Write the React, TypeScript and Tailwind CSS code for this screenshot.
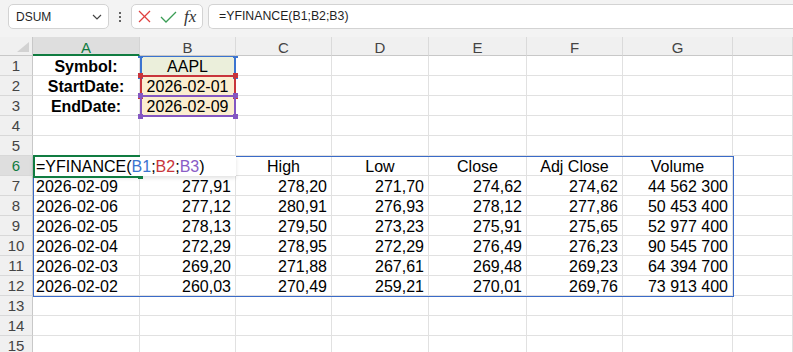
import React from "react";

type Tone = "blue" | "red" | "purple";

const COL_LETTERS = ["A", "B", "C", "D", "E", "F", "G", ""];

const tableRows: string[][] = [
  ["2026-02-09", "277,91", "278,20", "271,70", "274,62", "274,62", "44 562 300"],
  ["2026-02-06", "277,12", "280,91", "276,93", "278,12", "277,86", "50 453 400"],
  ["2026-02-05", "278,13", "279,50", "273,23", "275,91", "275,65", "52 977 400"],
  ["2026-02-04", "272,29", "278,95", "272,29", "276,49", "276,23", "90 545 700"],
  ["2026-02-03", "269,20", "271,88", "267,61", "269,48", "269,23", "64 394 700"],
  ["2026-02-02", "260,03", "270,49", "259,21", "270,01", "269,76", "73 913 400"],
];

const headerCols = ["", "", "High", "Low", "Close", "Adj Close", "Volume", ""];

const boxBorder: Record<Tone, string> = {
  blue: "border-[#3b74d0]",
  red: "border-[#c8353b]",
  purple: "border-[#8457c2]",
};

const boxFill: Record<Tone, string> = {
  blue: "bg-[#3b74d0]",
  red: "bg-[#c8353b]",
  purple: "bg-[#8457c2]",
};

// coloured range outline drawn by Excel while a formula is being edited
function RefBox({ tone }: { tone: Tone }) {
  return (
    <div
      className={`pointer-events-none absolute left-0 top-[-1px] z-10 h-[22px] w-[96px] border-2 ${boxBorder[tone]}`}
    >
      <span className={`absolute -left-[4px] -top-[4px] size-[5px] ${boxFill[tone]}`} />
      <span className={`absolute -right-[4px] -top-[4px] size-[5px] ${boxFill[tone]}`} />
      <span className={`absolute -bottom-[4px] -left-[4px] size-[5px] ${boxFill[tone]}`} />
      <span className={`absolute -bottom-[4px] -right-[4px] size-[5px] ${boxFill[tone]}`} />
    </div>
  );
}

function FormulaBar() {
  return (
    <div className="flex h-[37px] items-start bg-[#f3f3f3] pt-1">
      {/* Name box */}
      <div className="ml-2 flex h-[25px] w-[101px] items-center justify-between rounded-[5px] border border-[#d3d3d3] bg-white pl-[7px] pr-[6px] text-[12px] text-[#1f1f1f]">
        <span>DSUM</span>
        <svg width="10" height="6" viewBox="0 0 10 6" fill="none" stroke="#444" strokeWidth="1.2">
          <polyline points="1,1 5,5 9,1" />
        </svg>
      </div>

      {/* more dots */}
      <div className="flex h-[25px] w-[22px] flex-col items-center justify-center gap-[2px]">
        <span className="size-[2px] rounded-full bg-[#333]" />
        <span className="size-[2px] rounded-full bg-[#333]" />
        <span className="size-[2px] rounded-full bg-[#333]" />
      </div>

      {/* cancel / enter / fx */}
      <div className="flex h-[25px] w-[72px] items-center rounded-[5px] border border-[#d3d3d3] bg-white pl-[6px]">
        <svg width="13" height="13" viewBox="0 0 13 13" stroke="#e0403f" strokeWidth="1.3">
          <line x1="1" y1="1" x2="12" y2="12" />
          <line x1="12" y1="1" x2="1" y2="12" />
        </svg>
        <svg className="ml-[9px]" width="17" height="12" viewBox="0 0 17 12" fill="none" stroke="#3a9d55" strokeWidth="1.3">
          <polyline points="1,6 6,11 16,1" />
        </svg>
        <span className="ml-[7px] font-['Liberation_Serif',serif] text-[17px] italic leading-none text-[#333]">
          fx
        </span>
      </div>

      {/* formula text */}
      <div className="ml-[5px] flex h-[25px] flex-1 items-center rounded-l-[5px] border border-r-0 border-[#d3d3d3] bg-white pl-[10px] text-[12.3px] text-[#1f1f1f]">
        =YFINANCE(B1;B2;B3)
      </div>
    </div>
  );
}

function ColumnHeader() {
  return (
    <>
      <div className="relative z-20 h-[19px] border-b border-r border-[#c8c8c8] bg-[#f0f0f0]">
        <svg className="absolute bottom-[3px] right-[3px]" width="12" height="10" viewBox="0 0 12 10">
          <polygon points="12,0 12,10 0,10" fill="#d2d2d2" />
        </svg>
      </div>
      {COL_LETTERS.map((c, i) => (
        <div
          key={i}
          className={
            i === 0
              ? "relative z-20 h-[19px] border-b-2 border-r border-b-[#107c41] border-r-[#d4d4d4] bg-[#dedede] pt-px text-center text-[15px] leading-[19px] text-[#107c41]"
              : "relative z-20 h-[19px] border-b border-r border-b-[#c8c8c8] border-r-[#dadada] bg-[#f0f0f0] pt-px text-center text-[15px] leading-[19px] text-[#444]"
          }
        >
          {c}
        </div>
      ))}
    </>
  );
}

function RowNumber({ n }: { n: number }) {
  return (
    <div
      className={
        n === 6
          ? "h-5 border-b border-r border-b-[#d8d8d8] border-r-[#c8c8c8] bg-[#dedede] text-center text-[15px] leading-5 text-[#107c41]"
          : "h-5 border-b border-r border-b-[#d8d8d8] border-r-[#c8c8c8] bg-[#f0f0f0] text-center text-[15px] leading-5 text-[#444]"
      }
    >
      {n}
    </div>
  );
}

const cellBase =
  "relative flex h-5 whitespace-nowrap border-b border-r border-[#e1e1e1] px-[3px] pt-px text-[16px] leading-5 text-black";

function SheetRow({ n }: { n: number }) {
  const cells: React.ReactNode[] = [];

  for (let c = 0; c < 8; c++) {
    let content: React.ReactNode = null;
    let cls = cellBase;

    if (n === 1 && c === 0) {
      content = "Symbol:";
      cls += " justify-center font-bold";
    } else if (n === 2 && c === 0) {
      content = "StartDate:";
      cls += " justify-center font-bold";
    } else if (n === 3 && c === 0) {
      content = "EndDate:";
      cls += " justify-center font-bold";
    } else if (n === 1 && c === 1) {
      content = (
        <>
          AAPL
          <RefBox tone="blue" />
        </>
      );
      cls += " justify-center bg-[#ebefdb]";
    } else if (n === 2 && c === 1) {
      content = (
        <>
          2026-02-01
          <RefBox tone="red" />
        </>
      );
      cls += " justify-center bg-[#fbeed0]";
    } else if (n === 3 && c === 1) {
      content = (
        <>
          2026-02-09
          <RefBox tone="purple" />
        </>
      );
      cls += " justify-center bg-[#fbeed0]";
    } else if (n === 6 && c === 0) {
      content = (
        <>
          {/* in-cell editor overflowing into B6 */}
          <div className="absolute left-0 top-0 z-30 h-[20px] w-[203px] bg-white pl-[3px] pt-px leading-5 shadow-[0_2px_4px_rgba(0,0,0,0.12)]">
            =YFINANCE(<span className="text-[#3b74d0]">B1</span>;
            <span className="text-[#c8353b]">B2</span>;
            <span className="text-[#8a5cc6]">B3</span>)
          </div>
          <div className="pointer-events-none absolute left-0 top-[-1px] z-40 h-[23px] w-[107px] border-2 border-r-0 border-[#107c41]" />
          <div className="absolute left-[105px] top-[20px] z-40 h-[3px] w-[5px] bg-[#107c41]" />
        </>
      );
    } else if (n === 6) {
      content = headerCols[c];
      cls += " justify-center";
    } else if (n >= 7 && n <= 12 && c < 7) {
      content = tableRows[n - 7][c];
      cls += c === 0 ? " justify-start" : " justify-end pr-[4px]";
    }

    cells.push(
      <div key={c} className={cls}>
        {content}
      </div>
    );
  }

  return (
    <>
      <RowNumber n={n} />
      {cells}
    </>
  );
}

export default function App() {
  const rowNumbers = Array.from({ length: 15 }, (_, i) => i + 1);

  return (
    <div className="h-[352px] w-[793px] overflow-hidden bg-white font-['Liberation_Sans',Arial,sans-serif]">
      <FormulaBar />

      <div className="relative grid grid-cols-[33px_107px_96px_96px_97px_98px_96px_110px_1fr]">
        <ColumnHeader />
        {rowNumbers.map((n) => (
          <SheetRow key={n} n={n} />
        ))}

        {/* spill range border A6:G12 */}
        <div className="pointer-events-none absolute left-[33px] top-[119px] z-10 h-[141px] w-[701px] border border-[#3a6bc8]" />
      </div>
    </div>
  );
}
